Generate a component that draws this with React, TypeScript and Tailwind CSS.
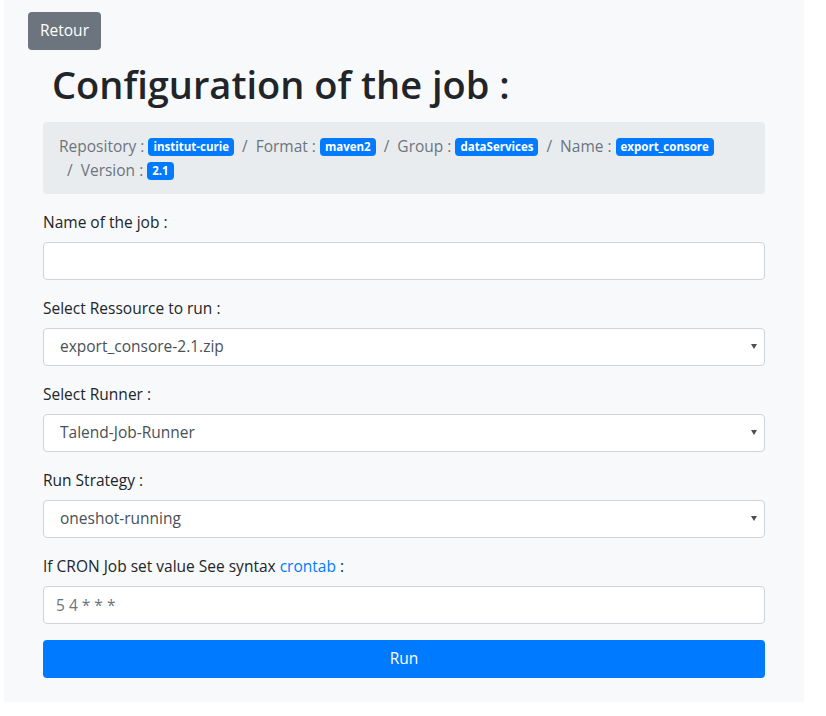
import React from "react";

const font = { fontFamily: '"Open Sans", "Noto Sans", sans-serif' };

const crumbs = [
  { label: "Repository", value: "institut-curie" },
  { label: "Format", value: "maven2" },
  { label: "Group", value: "dataServices" },
  { label: "Name", value: "export_consore" },
  { label: "Version", value: "2.1" },
];

function Badge({ children }: { children: React.ReactNode }) {
  return (
    <span className="inline-block rounded-[4px] bg-[#007bff] px-[5px] py-[3px] align-[1px] text-[11.5px] leading-none font-bold text-white">
      {children}
    </span>
  );
}

function SelectField({ label, value }: { label: string; value: string }) {
  return (
    <div className="mb-4">
      <label className="mb-2 block leading-6">{label}</label>
      <div className="relative">
        <select
          className="block h-[38px] w-full appearance-none rounded-[4px] border border-[#ced4da] bg-white pl-4 pr-8 text-[15.5px] text-[#495057] outline-none"
          defaultValue={value}
        >
          <option>{value}</option>
        </select>
        <span className="pointer-events-none absolute right-[8px] top-[16px] h-0 w-0 border-l-[3px] border-r-[3px] border-t-[5px] border-l-transparent border-r-transparent border-t-[#495057]" />
      </div>
    </div>
  );
}

export default function App() {
  return (
    <div className="min-h-screen bg-white" style={font}>
      <div className="ml-[4px] w-[800px] bg-[#f8f9fa] pb-6 pt-3 text-[15.5px] text-[#212529]">
        <div className="px-6">
          <button className="h-[38px] rounded-[4px] bg-[#6c757d] px-3 text-[15.5px] text-white">
            Retour
          </button>
        </div>
        <div className="px-[39px]">
          <h1 className="mb-[14px] mt-[10px] pl-[9px] text-[38px] leading-[48px] font-semibold">
            Configuration of the job :
          </h1>
          <div className="mb-4 flex flex-wrap rounded-[4px] bg-[#e9ecef] px-4 py-3 leading-6 text-[#6c757d]">
            {crumbs.map((c, i) => (
              <div key={c.label} className={i > 0 ? "pl-2" : ""}>
                {i > 0 && <span className="pr-2">/</span>}
                {c.label} : <Badge>{c.value}</Badge>
              </div>
            ))}
          </div>
          <div className="mb-4">
            <label className="mb-2 block leading-6">Name of the job :</label>
            <input
              type="text"
              className="block h-[38px] w-full rounded-[4px] border border-[#ced4da] bg-white px-3 text-[15.5px] text-[#495057] outline-none"
            />
          </div>
          <SelectField label="Select Ressource to run :" value="export_consore-2.1.zip" />
          <SelectField label="Select Runner :" value="Talend-Job-Runner" />
          <SelectField label="Run Strategy :" value="oneshot-running" />
          <div className="mb-4">
            <label className="mb-2 block leading-6">
              If CRON Job set value See syntax{" "}
              <a href="#" className="text-[#007bff]">
                crontab
              </a>{" "}
              :
            </label>
            <input
              type="text"
              placeholder="5 4 * * *"
              className="block h-[38px] w-full rounded-[4px] border border-[#ced4da] bg-white px-3 text-[15.5px] text-[#495057] outline-none placeholder:text-[#6c757d]"
            />
          </div>
          <button className="block h-[38px] w-full rounded-[4px] bg-[#007bff] text-[15.5px] text-white">
            Run
          </button>
        </div>
      </div>
    </div>
  );
}
